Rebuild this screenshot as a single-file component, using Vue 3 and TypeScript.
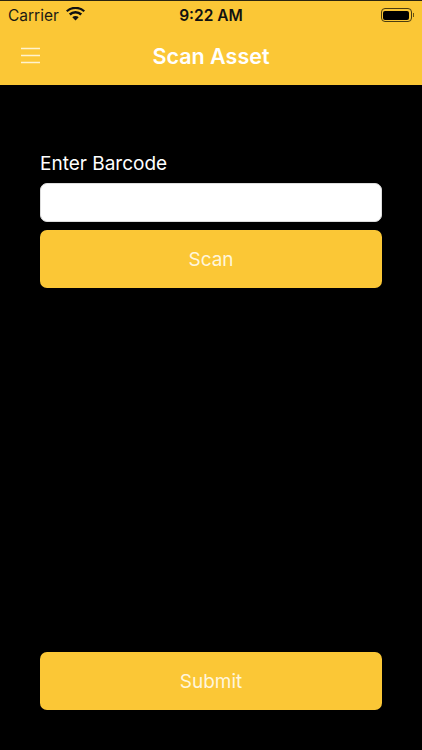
<script setup lang="ts">
const title = 'Scan Asset'
</script>

<template>
  <div class="screen">
    <header class="top">
      <div class="status">
        <div class="left">
          <span class="carrier">Carrier</span>
          <svg class="wifi" width="19" height="14" viewBox="0 0 19 14">
            <path d="M9.5 13.6 6.3 10.2a4.6 4.6 0 0 1 6.4 0Z" fill="#111" />
            <path d="M4.6 8.4 2.9 6.6a9.6 9.6 0 0 1 13.2 0l-1.7 1.8a7.1 7.1 0 0 0-9.8 0Z" fill="#111" />
            <path d="M1.5 5.1 0 3.5a13.9 13.9 0 0 1 19 0l-1.5 1.6a11.7 11.7 0 0 0-16 0Z" fill="#111" />
          </svg>
        </div>
        <span class="time">9:22 AM</span>
        <div class="battery">
          <span class="shell"><span class="level"></span></span>
          <span class="nub"></span>
        </div>
      </div>
      <div class="nav">
        <svg class="menu" width="20" height="17" viewBox="0 0 20 17">
          <path d="M0 1.5H19M0 8.5H19M0 15.5H19" stroke="#fff3cf" stroke-width="1.7" fill="none" />
        </svg>
        <h1>{{ title }}</h1>
      </div>
    </header>
    <main class="body">
      <div class="form">
        <label class="label" for="barcode">Enter Barcode</label>
        <input id="barcode" class="input" type="text" />
        <button class="btn" type="button">Scan</button>
      </div>
      <button class="btn" type="button">Submit</button>
    </main>
  </div>
</template>

<style scoped>
.screen {
  width: 422px;
  height: 750px;
  background: #000;
  display: flex;
  flex-direction: column;
  font-family: Inter, "Liberation Sans", sans-serif;
  overflow: hidden;
}
.top {
  height: 85px;
  flex: none;
  background: #fbc736;
  border-top: 1px solid #2a2410;
  box-sizing: border-box;
}
.status {
  height: 28px;
  display: grid;
  grid-template-columns: 1fr auto 1fr;
  align-items: center;
  padding: 0 8px;
  color: #111;
}
.left {
  display: flex;
  align-items: center;
  gap: 7px;
}
.carrier {
  font-size: 15.5px;
  color: #1a1a14;
}
.wifi {
  margin-top: -3px;
}
.time {
  font-size: 15.5px;
  font-weight: 600;
}
.battery {
  display: flex;
  align-items: center;
  justify-content: flex-end;
  gap: 1px;
}
.shell {
  width: 31px;
  height: 14px;
  box-sizing: border-box;
  border: 1px solid #4a3c10;
  border-radius: 4px;
  padding: 1.5px;
  display: flex;
}
.level {
  flex: 1;
  background: #000;
  border-radius: 2px;
}
.nub {
  width: 1.5px;
  height: 4px;
  background: #6a5414;
}
.nav {
  position: relative;
  height: 54px;
  display: flex;
  align-items: center;
  justify-content: center;
}
.menu {
  position: absolute;
  left: 21px;
  top: 18px;
}
h1 {
  margin: 0;
  font-size: 21.5px;
  font-weight: 600;
  color: #fff;
}
.body {
  flex: 1;
  display: flex;
  flex-direction: column;
  justify-content: space-between;
  padding: 65px 40px 40px;
}
.form {
  display: flex;
  flex-direction: column;
}
.label {
  color: #fff;
  font-size: 19px;
  line-height: 26px;
  margin-top: 1px;
  margin-bottom: 6px;
}
.input {
  height: 39px;
  box-sizing: border-box;
  border: 1px solid #ddd;
  border-radius: 7px;
  background: #fff;
  margin-bottom: 8px;
}
.btn {
  height: 58px;
  border: 0;
  border-radius: 7px;
  background: #fbc736;
  color: #fff6dc;
  font: inherit;
  font-size: 19px;
  padding: 0;
}
</style>

<style>
html, body { background: #000; }
</style>
